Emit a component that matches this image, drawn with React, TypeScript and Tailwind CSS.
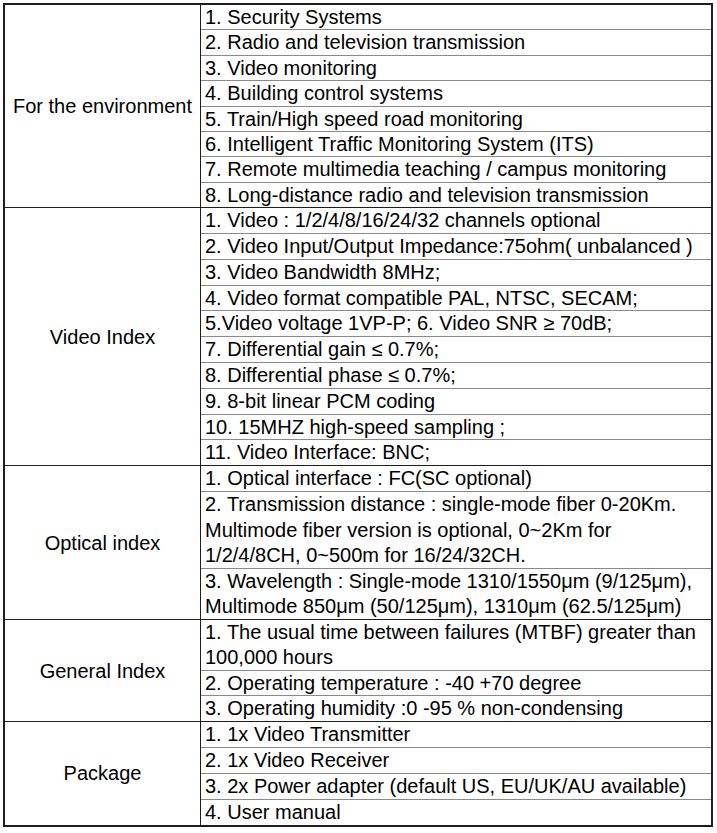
const SECTIONS: { title: string; leading: string; rows: string[][] }[] = [
  {
    title: 'For the environment',
    leading: 'leading-[24.4px]',
    rows: [
      ['1. Security Systems'],
      ['2. Radio and television transmission'],
      ['3. Video monitoring'],
      ['4. Building control systems'],
      ['5. Train/High speed road monitoring'],
      ['6. Intelligent Traffic Monitoring System (ITS)'],
      ['7. Remote multimedia teaching / campus monitoring'],
      ['8. Long-distance radio and television transmission'],
    ],
  },
  {
    title: 'Video Index',
    leading: 'leading-[24.8px]',
    rows: [
      ['1. Video : 1/2/4/8/16/24/32 channels optional'],
      ['2. Video Input/Output Impedance:75ohm( unbalanced )'],
      ['3. Video Bandwidth 8MHz;'],
      ['4. Video format compatible PAL, NTSC, SECAM;'],
      ['5.Video voltage 1VP-P; 6. Video SNR \u2265 70dB;'],
      ['7. Differential gain \u2264 0.7%;'],
      ['8. Differential phase \u2264 0.7%;'],
      ['9. 8-bit linear PCM coding'],
      ['10. 15MHZ high-speed sampling ;'],
      ['11. Video Interface: BNC;'],
    ],
  },
  {
    title: 'Optical index',
    leading: 'leading-[25.2px]',
    rows: [
      ['1. Optical interface : FC(SC optional)'],
      [
        '2. Transmission distance : single-mode fiber 0-20Km.',
        'Multimode fiber version is optional, 0~2Km for',
        '1/2/4/8CH, 0~500m for 16/24/32CH.',
      ],
      [
        '3. Wavelength : Single-mode 1310/1550\u03bcm (9/125\u03bcm),',
        'Multimode 850\u03bcm (50/125\u03bcm), 1310\u03bcm (62.5/125\u03bcm)',
      ],
    ],
  },
  {
    title: 'General Index',
    leading: 'leading-[24.6px]',
    rows: [
      ['1. The usual time between failures (MTBF) greater than', '100,000 hours'],
      ['2. Operating temperature : -40 +70 degree'],
      ['3. Operating humidity :0 -95 % non-condensing'],
    ],
  },
  {
    title: 'Package',
    leading: 'leading-[25px]',
    rows: [
      ['1. 1x Video Transmitter'],
      ['2. 1x Video Receiver'],
      ['3. 2x Power adapter (default US, EU/UK/AU available)'],
      ['4. User manual'],
    ],
  },
]

export default function App() {
  return (
    <div className="min-h-[833px] w-[717px] bg-white pt-[3px] pl-[3px] text-black font-['Liberation_Sans',Arial,sans-serif] text-[20px]">
      <div className="w-[710px] border-2 border-[#1e1e1e]">
        {SECTIONS.map((s) => (
          <div key={s.title} className="grid grid-cols-[196px_1fr] border-b border-[#1e1e1e] last:border-b-0">
            <div className="flex items-center justify-center border-r border-[#1e1e1e] whitespace-nowrap">
              {s.title}
            </div>
            <div className={s.leading}>
              {s.rows.map((lines) => (
                <div
                  key={lines[0]}
                  className="border-b border-[#8a8a8a] last:border-b-0 pl-[4px] whitespace-nowrap"
                >
                  {lines.map((l) => (
                    <div key={l}>{l}</div>
                  ))}
                </div>
              ))}
            </div>
          </div>
        ))}
      </div>
    </div>
  )
}
